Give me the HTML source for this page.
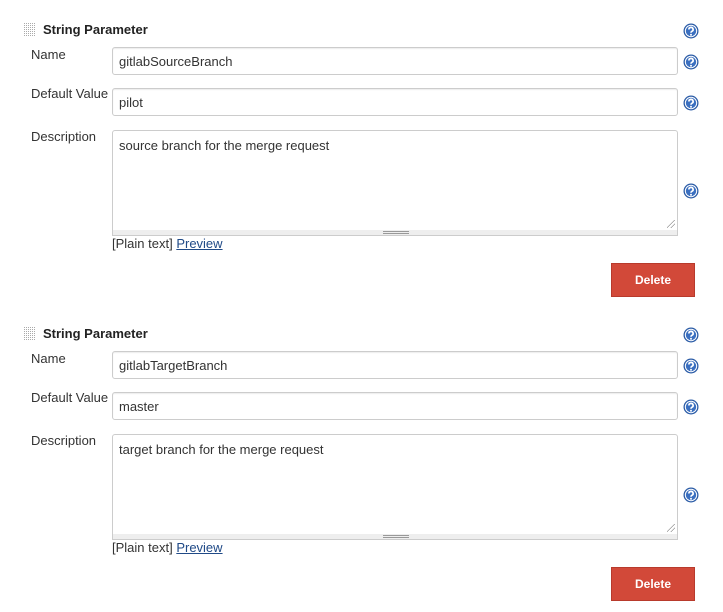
<!DOCTYPE html>
<html><head><style>
body{margin:0;width:723px;height:612px;background:#fff;font-family:"Liberation Sans",sans-serif;font-size:13px;color:#333;position:relative;overflow:hidden}
.b{position:absolute;left:0;width:723px;height:304px}
.a{position:absolute}
.grip{left:24px;top:23px;width:12px;height:14px}
.t{left:43px;top:22px;font-weight:bold;font-size:13px;color:#222}
.lbl{left:31px;font-size:13px;color:#333}
.inp{left:112px;width:564px;height:26px;border:1px solid #ccc;border-radius:3px;box-shadow:inset 0 1px 1px rgba(0,0,0,.08);font-size:13px;line-height:27px;text-indent:6px;color:#333}
.ta{left:112px;top:130px;width:564px;height:99px;border:1px solid #ccc;border-radius:3px 3px 0 0;font-size:13px;padding:0}
.ta span{position:absolute;left:6px;top:7px}
.bar{left:112px;top:230px;width:566px;height:6px;background:#eee;border:1px solid #ccc;border-top:none;box-sizing:border-box}
.bar:after{content:"";position:absolute;left:270px;top:1px;width:26px;height:3px;border-top:1px solid #999;border-bottom:1px solid #999;box-sizing:border-box}
.h{left:683px;width:16px;height:16px}
.pl{left:112px;top:236px;font-size:13px}
.pl a{color:#204a87;text-decoration:underline}
.del{left:611px;top:263px;width:84px;height:34px;background:#d24939;border:1px solid #b83a2c;box-sizing:border-box;color:#fff;font-weight:bold;font-size:12px;text-align:center;line-height:32px}
.rs{right:2px;bottom:2px;width:8px;height:8px;background:linear-gradient(135deg,transparent 45%,#999 45%,#999 52%,transparent 52%,transparent 70%,#999 70%,#999 77%,transparent 77%)}
</style></head><body>

<div class="b" style="top:0">
<svg class="a grip" viewBox="0 0 12 14"><defs><pattern id="d1" width="2" height="2" patternUnits="userSpaceOnUse"><rect width="1" height="1" fill="#aaa"/></pattern></defs><rect width="12" height="14" fill="url(#d1)"/></svg>
<div class="a t">String Parameter</div>
<svg class="a h" style="top:23px" viewBox="0 0 16 16"><circle cx="8" cy="8" r="7.5" fill="#2a5ba6"/><circle cx="8" cy="8" r="6.2" fill="#fff"/><circle cx="8" cy="8" r="5.2" fill="#3a6fc0"/><path d="M5.9 6.5a2.1 2.1 0 1 1 2.9 1.9c-.7.3-.8.7-.8 1.4" stroke="#fff" stroke-width="1.7" fill="none"/><circle cx="8" cy="11.8" r="1" fill="#fff"/></svg>
<div class="a lbl" style="top:47px">Name</div>
<div class="a inp" style="top:47px">gitlabSourceBranch</div>
<svg class="a h" style="top:54px" viewBox="0 0 16 16"><circle cx="8" cy="8" r="7.5" fill="#2a5ba6"/><circle cx="8" cy="8" r="6.2" fill="#fff"/><circle cx="8" cy="8" r="5.2" fill="#3a6fc0"/><path d="M5.9 6.5a2.1 2.1 0 1 1 2.9 1.9c-.7.3-.8.7-.8 1.4" stroke="#fff" stroke-width="1.7" fill="none"/><circle cx="8" cy="11.8" r="1" fill="#fff"/></svg>
<div class="a lbl" style="top:86px">Default Value</div>
<div class="a inp" style="top:88px">pilot</div>
<svg class="a h" style="top:95px" viewBox="0 0 16 16"><circle cx="8" cy="8" r="7.5" fill="#2a5ba6"/><circle cx="8" cy="8" r="6.2" fill="#fff"/><circle cx="8" cy="8" r="5.2" fill="#3a6fc0"/><path d="M5.9 6.5a2.1 2.1 0 1 1 2.9 1.9c-.7.3-.8.7-.8 1.4" stroke="#fff" stroke-width="1.7" fill="none"/><circle cx="8" cy="11.8" r="1" fill="#fff"/></svg>
<div class="a lbl" style="top:129px">Description</div>
<div class="a ta"><span>source branch for the merge request</span><div class="a rs"></div></div>
<div class="a bar"></div>
<svg class="a h" style="top:183px" viewBox="0 0 16 16"><circle cx="8" cy="8" r="7.5" fill="#2a5ba6"/><circle cx="8" cy="8" r="6.2" fill="#fff"/><circle cx="8" cy="8" r="5.2" fill="#3a6fc0"/><path d="M5.9 6.5a2.1 2.1 0 1 1 2.9 1.9c-.7.3-.8.7-.8 1.4" stroke="#fff" stroke-width="1.7" fill="none"/><circle cx="8" cy="11.8" r="1" fill="#fff"/></svg>
<div class="a pl">[Plain text] <a>Preview</a></div>
<div class="a del">Delete</div>
</div>

<div class="b" style="top:304px">
<svg class="a grip" viewBox="0 0 12 14"><defs><pattern id="d2" width="2" height="2" patternUnits="userSpaceOnUse"><rect width="1" height="1" fill="#aaa"/></pattern></defs><rect width="12" height="14" fill="url(#d2)"/></svg>
<div class="a t">String Parameter</div>
<svg class="a h" style="top:23px" viewBox="0 0 16 16"><circle cx="8" cy="8" r="7.5" fill="#2a5ba6"/><circle cx="8" cy="8" r="6.2" fill="#fff"/><circle cx="8" cy="8" r="5.2" fill="#3a6fc0"/><path d="M5.9 6.5a2.1 2.1 0 1 1 2.9 1.9c-.7.3-.8.7-.8 1.4" stroke="#fff" stroke-width="1.7" fill="none"/><circle cx="8" cy="11.8" r="1" fill="#fff"/></svg>
<div class="a lbl" style="top:47px">Name</div>
<div class="a inp" style="top:47px">gitlabTargetBranch</div>
<svg class="a h" style="top:54px" viewBox="0 0 16 16"><circle cx="8" cy="8" r="7.5" fill="#2a5ba6"/><circle cx="8" cy="8" r="6.2" fill="#fff"/><circle cx="8" cy="8" r="5.2" fill="#3a6fc0"/><path d="M5.9 6.5a2.1 2.1 0 1 1 2.9 1.9c-.7.3-.8.7-.8 1.4" stroke="#fff" stroke-width="1.7" fill="none"/><circle cx="8" cy="11.8" r="1" fill="#fff"/></svg>
<div class="a lbl" style="top:86px">Default Value</div>
<div class="a inp" style="top:88px">master</div>
<svg class="a h" style="top:95px" viewBox="0 0 16 16"><circle cx="8" cy="8" r="7.5" fill="#2a5ba6"/><circle cx="8" cy="8" r="6.2" fill="#fff"/><circle cx="8" cy="8" r="5.2" fill="#3a6fc0"/><path d="M5.9 6.5a2.1 2.1 0 1 1 2.9 1.9c-.7.3-.8.7-.8 1.4" stroke="#fff" stroke-width="1.7" fill="none"/><circle cx="8" cy="11.8" r="1" fill="#fff"/></svg>
<div class="a lbl" style="top:129px">Description</div>
<div class="a ta"><span>target branch for the merge request</span><div class="a rs"></div></div>
<div class="a bar"></div>
<svg class="a h" style="top:183px" viewBox="0 0 16 16"><circle cx="8" cy="8" r="7.5" fill="#2a5ba6"/><circle cx="8" cy="8" r="6.2" fill="#fff"/><circle cx="8" cy="8" r="5.2" fill="#3a6fc0"/><path d="M5.9 6.5a2.1 2.1 0 1 1 2.9 1.9c-.7.3-.8.7-.8 1.4" stroke="#fff" stroke-width="1.7" fill="none"/><circle cx="8" cy="11.8" r="1" fill="#fff"/></svg>
<div class="a pl">[Plain text] <a>Preview</a></div>
<div class="a del">Delete</div>
</div>

</body></html>
